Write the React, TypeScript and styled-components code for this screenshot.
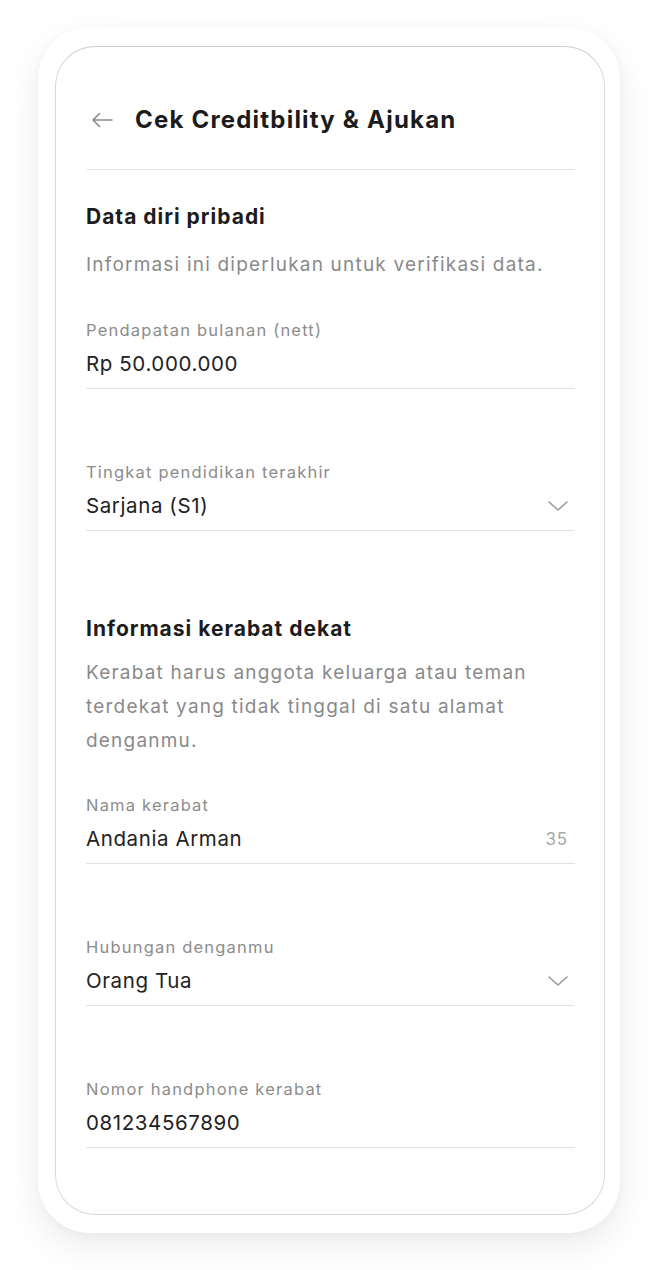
import React from "react";
import styled, { createGlobalStyle } from "styled-components";

const GlobalStyle = createGlobalStyle`
  html, body {
    margin: 0;
    padding: 0;
    background: #ffffff;
  }
  body {
    font-family: Inter, "Noto Sans", "Liberation Sans", sans-serif;
    -webkit-font-smoothing: antialiased;
  }
`;

type Field = {
  label: string;
  value: string;
  select?: boolean;
  counter?: string;
};

const personalFields: Field[] = [
  { label: "Pendapatan bulanan (nett)", value: "Rp 50.000.000" },
  { label: "Tingkat pendidikan terakhir", value: "Sarjana (S1)", select: true },
];

const relativeFields: Field[] = [
  { label: "Nama kerabat", value: "Andania Arman", counter: "35" },
  { label: "Hubungan denganmu", value: "Orang Tua", select: true },
  { label: "Nomor handphone kerabat", value: "081234567890" },
];

function ArrowLeft() {
  return (
    <svg width="22" height="16" viewBox="0 0 22 16" fill="none">
      <path d="M21 8H2M8.5 1.5L2 8l6.5 6.5" stroke="#8a8a8a" strokeWidth="1.6" strokeLinecap="round" strokeLinejoin="round" />
    </svg>
  );
}

function Chevron() {
  return (
    <svg width="22" height="12" viewBox="0 0 22 12" fill="none">
      <path d="M2 2l9 8 9-8" stroke="#9a9a9a" strokeWidth="1.6" strokeLinecap="round" strokeLinejoin="round" />
    </svg>
  );
}

function FormField({ field }: { field: Field }) {
  return (
    <FieldWrapper>
      <Label>{field.label}</Label>
      <ValueRow>
        <Value>{field.value}</Value>
        {field.counter && <Counter>{field.counter}</Counter>}
        {field.select && (
          <ChevronBox>
            <Chevron />
          </ChevronBox>
        )}
      </ValueRow>
    </FieldWrapper>
  );
}

export default function App() {
  return (
    <>
      <GlobalStyle />
      <Page>
        <PhoneFrame>
          <Screen>
            <Header>
              <BackButton>
                <ArrowLeft />
              </BackButton>
              <Title>Cek Creditbility &amp; Ajukan</Title>
            </Header>
            <Divider />

            <SectionTitle $top={33}>Data diri pribadi</SectionTitle>
            <Description $top={17}>Informasi ini diperlukan untuk verifikasi data.</Description>
            <FieldList $top={37}>
              {personalFields.map((f) => (
                <FormField key={f.label} field={f} />
              ))}
            </FieldList>

            <SectionTitle $top={84}>Informasi kerabat dekat</SectionTitle>
            <Description $top={13}>
              Kerabat harus anggota keluarga atau teman terdekat yang tidak tinggal di satu alamat denganmu.
            </Description>
            <FieldList $top={36}>
              {relativeFields.map((f) => (
                <FormField key={f.label} field={f} />
              ))}
            </FieldList>
          </Screen>
        </PhoneFrame>
      </Page>
    </>
  );
}

const Page = styled.div`
  width: 667px;
  min-height: 1270px;
  padding: 27px 0 0 38px;
  box-sizing: border-box;
`;

const PhoneFrame = styled.div`
  width: 582px;
  height: 1206px;
  box-sizing: border-box;
  padding: 19px 15px 18px 17px;
  background: #ffffff;
  border-radius: 52px;
  box-shadow: 0 14px 36px rgba(0, 0, 0, 0.08), 0 2px 10px rgba(0, 0, 0, 0.03);
`;

const Screen = styled.div`
  height: 100%;
  box-sizing: border-box;
  border: 1px solid #d8d8d8;
  border-top-color: #cfcfcf;
  border-radius: 40px;
  padding: 0 29px 0 30px;
  overflow: hidden;
`;

const Header = styled.div`
  display: flex;
  align-items: center;
  height: 32px;
  margin-top: 57px;
  gap: 22px;
`;

const BackButton = styled.div`
  display: flex;
  align-items: center;
  padding-left: 5px;
`;

const Title = styled.h1`
  margin: 0;
  font-size: 24px;
  line-height: 32px;
  font-weight: 700;
  color: #1c1c1c;
  letter-spacing: 1.2px;
`;

const Divider = styled.div`
  height: 1px;
  background: #e4e4e4;
  margin-top: 33px;
`;

const SectionTitle = styled.h2<{ $top: number }>`
  margin: ${(p) => p.$top}px 0 0;
  font-size: 21px;
  line-height: 28px;
  font-weight: 700;
  color: #1c1c1c;
  letter-spacing: 1px;
`;

const Description = styled.p<{ $top: number }>`
  margin: ${(p) => p.$top}px 0 0;
  font-size: 19px;
  line-height: 34px;
  color: #8a8a8a;
  letter-spacing: 1.2px;
`;

const FieldList = styled.div<{ $top: number }>`
  display: flex;
  flex-direction: column;
  gap: 72px;
  margin-top: ${(p) => p.$top}px;
`;

const FieldWrapper = styled.div`
  display: flex;
  flex-direction: column;
  gap: 9px;
  padding-bottom: 10px;
  border-bottom: 1px solid #e2e2e2;
`;

const Label = styled.div`
  font-size: 16.5px;
  line-height: 22px;
  color: #8c8c8c;
  letter-spacing: 1.2px;
`;

const ValueRow = styled.div`
  display: flex;
  align-items: center;
  justify-content: space-between;
  height: 28px;
`;

const Value = styled.div`
  font-size: 20.5px;
  line-height: 28px;
  color: #222222;
  letter-spacing: 0.6px;
`;

const Counter = styled.div`
  font-size: 17px;
  color: #a8a8a8;
  padding-right: 7px;
  letter-spacing: 0.8px;
`;

const ChevronBox = styled.div`
  display: flex;
  align-items: center;
  padding-right: 6px;
`;
